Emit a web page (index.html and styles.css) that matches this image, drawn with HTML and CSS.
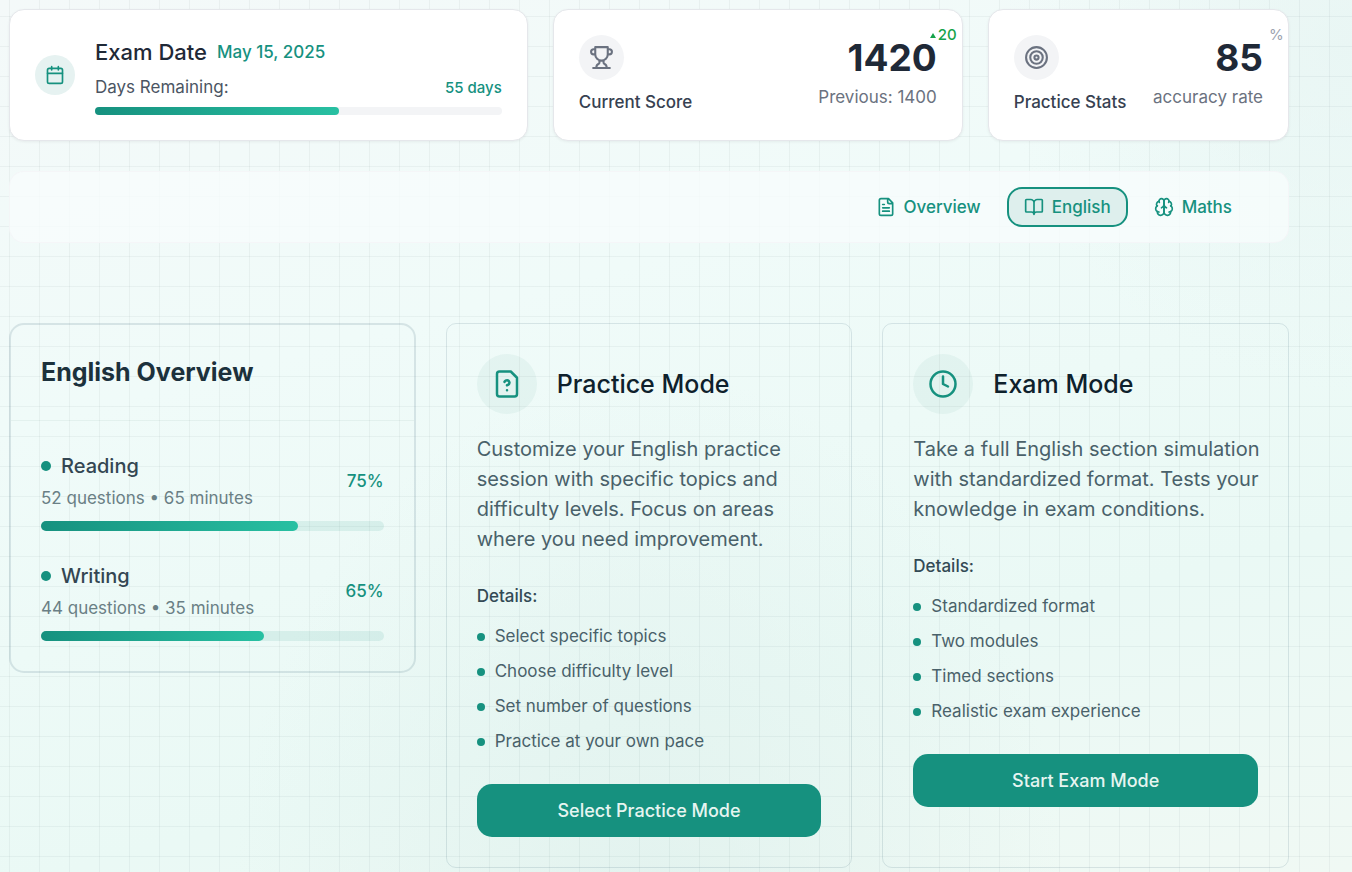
FILE: index.html
```html
<!DOCTYPE html>
<html lang="en">
<head>
<meta charset="utf-8">
<meta name="viewport" content="width=device-width, initial-scale=1">
<title>SAT Dashboard – English</title>
<link rel="stylesheet" href="styles.css">
</head>
<body>
<main class="page">
  <section class="summary">
    <article class="stat exam">
      <span class="badge badge-sm"><svg class="icon icon-20" viewBox="0 0 24 24"><path d="M8 2v4M16 2v4M3 10h18"/><rect x="3" y="4" width="18" height="18" rx="2"/></svg></span>
      <div class="exam-body">
        <div class="exam-title"><h2>Exam Date</h2><time datetime="2025-05-15">May 15, 2025</time></div>
        <div class="exam-row"><span>Days Remaining:</span><strong>55 days</strong></div>
        <div class="bar bar-thin"><div class="fill" style="width:60%"></div></div>
      </div>
    </article>
    <article class="stat">
      <div class="stat-name">
        <span class="badge badge-md"><svg class="icon icon-25" viewBox="0 0 24 24"><path d="M6 9H4.500a2.500 2.500 0 0 1 0-5H6M18 9h1.500a2.500 2.500 0 0 0 0-5H18M4 22h16M10 14.660V17c0 .55-.47.98-.97 1.210C7.850 18.750 7 20.240 7 22M14 14.660V17c0 .55.47.98.97 1.210C16.150 18.750 17 20.240 17 22M18 2H6v7a6 6 0 0 0 12 0V2Z"/></svg></span>
        <h3>Current Score</h3>
      </div>
      <div class="stat-value">
        <p class="number">1420<span class="note note-up"><svg class="arrow" viewBox="0 0 6 5"><path d="M3 0 6 5H0Z"/></svg>20</span></p>
        <p class="caption">Previous: 1400</p>
      </div>
    </article>
    <article class="stat">
      <div class="stat-name">
        <span class="badge badge-md"><svg class="icon icon-25" viewBox="0 0 24 24"><circle cx="12" cy="12" r="10"/><circle cx="12" cy="12" r="6"/><circle cx="12" cy="12" r="2"/></svg></span>
        <h3>Practice Stats</h3>
      </div>
      <div class="stat-value">
        <p class="number">85<span class="note">%</span></p>
        <p class="caption">accuracy rate</p>
      </div>
    </article>
  </section>

  <nav class="tabs">
    <button class="tab" type="button"><svg class="icon icon-20" viewBox="0 0 24 24"><path d="M15 2H6a2 2 0 0 0-2 2v16a2 2 0 0 0 2 2h12a2 2 0 0 0 2-2V7ZM14 2v4a2 2 0 0 0 2 2h4M10 9H8M16 13H8M16 17H8"/></svg>Overview</button>
    <button class="tab active" type="button" aria-current="page"><svg class="icon icon-20" viewBox="0 0 24 24"><path d="M12 7v14M3 18a1 1 0 0 1-1-1V4a1 1 0 0 1 1-1h5a4 4 0 0 1 4 4 4 4 0 0 1 4-4h5a1 1 0 0 1 1 1v13a1 1 0 0 1-1 1h-6a3 3 0 0 0-3 3 3 3 0 0 0-3-3z"/></svg>English</button>
    <button class="tab" type="button"><svg class="icon icon-20" viewBox="0 0 24 24"><path d="M12 5a3 3 0 1 0-5.997.125 4 4 0 0 0-2.526 5.770 4 4 0 0 0 .556 6.588A4 4 0 1 0 12 18Z"/><path d="M12 5a3 3 0 1 1 5.997.125 4 4 0 0 1 2.526 5.770 4 4 0 0 1-.556 6.588A4 4 0 1 1 12 18Z"/><path d="M15 13a4.500 4.500 0 0 1-3-4 4.500 4.500 0 0 1-3 4M17.599 6.500a3 3 0 0 0 .399-1.375M6.003 5.125A3 3 0 0 0 6.401 6.500M3.477 10.896a4 4 0 0 1 .585-.396M19.938 10.500a4 4 0 0 1 .585.396M6 18a4 4 0 0 1-1.967-.516M19.967 17.484A4 4 0 0 1 18 18"/></svg>Maths</button>
  </nav>

  <section class="modes">
    <article class="overview">
      <header class="overview-head"><h2>English Overview</h2></header>
      <div class="overview-body">
        <div class="skill">
          <div class="skill-row">
            <div class="skill-text"><h3>Reading</h3><p>52 questions • 65 minutes</p></div>
            <span class="percent">75%</span>
          </div>
          <div class="bar"><div class="fill" style="width:75%"></div></div>
        </div>
        <div class="skill">
          <div class="skill-row">
            <div class="skill-text"><h3>Writing</h3><p>44 questions • 35 minutes</p></div>
            <span class="percent">65%</span>
          </div>
          <div class="bar"><div class="fill" style="width:65%"></div></div>
        </div>
      </div>
    </article>

    <article class="mode">
      <header class="mode-head">
        <span class="badge badge-lg"><svg class="icon icon-30" viewBox="0 0 24 24"><path d="M15 2H6a2 2 0 0 0-2 2v16a2 2 0 0 0 2 2h12a2 2 0 0 0 2-2V7ZM12 17h.01M10 10.300c.2-.4.5-.8.9-1a2.100 2.100 0 0 1 2.600.4c.3.4.5.8.5 1.300 0 1.300-2 2-2 2"/></svg></span>
        <h2>Practice Mode</h2>
      </header>
      <p class="lead">Customize your English practice session with specific topics and difficulty levels. Focus on areas where you need improvement.</p>
      <h3>Details:</h3>
      <ul class="details">
        <li>Select specific topics</li>
        <li>Choose difficulty level</li>
        <li>Set number of questions</li>
        <li>Practice at your own pace</li>
      </ul>
      <button class="cta" type="button">Select Practice Mode</button>
    </article>

    <article class="mode">
      <header class="mode-head">
        <span class="badge badge-lg"><svg class="icon icon-30" viewBox="0 0 24 24"><circle cx="12" cy="12" r="10"/><path d="M12 6v6l4 2"/></svg></span>
        <h2>Exam Mode</h2>
      </header>
      <p class="lead">Take a full English section simulation with standardized format. Tests your knowledge in exam conditions.</p>
      <h3>Details:</h3>
      <ul class="details">
        <li>Standardized format</li>
        <li>Two modules</li>
        <li>Timed sections</li>
        <li>Realistic exam experience</li>
      </ul>
      <button class="cta" type="button">Start Exam Mode</button>
    </article>
  </section>
</main>
</body>
</html>
```
FILE: styles.css
```css
* { box-sizing: border-box; margin: 0; padding: 0; }

:root {
  --teal: #16917f;
  --teal-light: #28c0a2;
  --ink: #1f2937;
  --line: rgba(30, 80, 100, 0.13);
}

body {
  min-height: 100vh;
  font-family: Inter, "Open Sans", sans-serif;
  font-size: 17px;
  line-height: 25px;
  color: var(--ink);
  background:
    linear-gradient(to right, rgba(31, 60, 65, 0.05) 1px, transparent 1px) 9px 16px / 30px 30px,
    linear-gradient(to bottom, rgba(31, 60, 65, 0.05) 1px, transparent 1px) 9px 16px / 30px 30px,
    radial-gradient(circle at 100% 5%, rgba(230, 244, 242, 0.7), transparent 22%),
    radial-gradient(ellipse at 48% 105%, rgba(224, 241, 237, 0.8), transparent 42%),
    linear-gradient(165deg, #f4f9f9 0%, #f0fbf9 35%, #eaf9f5 72%, #f0f9f4 100%);
}

h2, h3 { font-weight: 500; }
button { font: inherit; cursor: pointer; }

.page {
  display: flex;
  flex-direction: column;
  padding: 9px 63px 4px 9px;
}

.icon {
  flex: none;
  fill: none;
  stroke: currentColor;
  stroke-width: 2;
  stroke-linecap: round;
  stroke-linejoin: round;
}
.icon-20 { width: 20px; height: 20px; }
.icon-25 { width: 25px; height: 25px; }
.icon-30 { width: 30px; height: 30px; }

.badge {
  display: flex;
  flex: none;
  align-items: center;
  justify-content: center;
  border-radius: 50%;
  color: var(--teal);
  background: rgba(22, 110, 100, 0.05);
}
.badge-sm { width: 40px; height: 40px; background: #e6f2f1; }
.badge-md { width: 45px; height: 45px; color: #6b7280; background: #f3f4f6; }
.badge-lg { width: 60px; height: 60px; }

.bar {
  height: 10px;
  border-radius: 5px;
  background: rgba(22, 145, 127, 0.1);
}
.bar-thin { height: 8px; background: #f3f4f6; }
.fill {
  height: 100%;
  border-radius: 5px;
  background: linear-gradient(to right, var(--teal), var(--teal-light));
}

/* Summary cards */
.summary {
  display: grid;
  grid-template-columns: repeat(12, 1fr);
  gap: 25px;
}
.stat {
  display: flex;
  justify-content: space-between;
  grid-column: span 3;
  padding: 25px;
  border: 1px solid #e5e7eb;
  border-radius: 15px;
  background: #fff;
  box-shadow: 0 1px 3px rgba(0, 0, 0, 0.06);
}
.stat:nth-child(2) { grid-column: span 4; }
.stat.exam {
  grid-column: span 5;
  align-items: center;
  gap: 20px;
}
.exam-body { flex: 1; }
.exam-title {
  display: flex;
  align-items: center;
  gap: 10px;
  margin-bottom: 5px;
}
.exam-title h2 { font-size: 22px; line-height: 35px; }
.exam-title time { font-size: 17px; font-weight: 500; color: var(--teal); }
.exam-row {
  display: flex;
  justify-content: space-between;
  margin-bottom: 7px;
  color: #4b5563;
}
.exam-row strong { font-size: 15px; font-weight: 500; color: var(--teal); }

.stat-name { display: flex; flex-direction: column; gap: 10px; }
.stat-name h3 { font-size: 17px; color: #374151; }
.stat-value { display: flex; flex-direction: column; gap: 5px; text-align: right; }
.number {
  position: relative;
  font-size: 37px;
  font-weight: 700;
  line-height: 45px;
}
.note {
  position: absolute;
  top: -10px;
  left: 100%;
  margin-left: 6px;
  font-size: 15px;
  font-weight: 400;
  line-height: 20px;
  color: #9ca3af;
}
.note-up {
  display: flex;
  align-items: center;
  gap: 2px;
  margin-left: -7px;
  font-weight: 500;
  color: #16a34a;
}
.arrow { width: 6px; height: 5px; fill: currentColor; }
.caption { color: #6b7280; }

/* Section tabs */
.tabs {
  display: flex;
  justify-content: flex-end;
  gap: 9px;
  margin: 30px 0 80px;
  padding: 15px 39px 15px 15px;
  border: 1px solid rgba(243, 244, 246, 0.7);
  border-radius: 15px;
  background: rgba(247, 252, 252, 0.8);
}
.tab {
  display: flex;
  align-items: center;
  gap: 8px;
  height: 40px;
  padding: 0 15px;
  border: 2px solid transparent;
  border-radius: 15px;
  font-weight: 500;
  color: var(--teal);
  background: none;
}
.tab.active { border-color: var(--teal); background: #deefed; }

/* Overview and mode cards */
.modes {
  display: grid;
  grid-template-columns: repeat(3, 1fr);
  align-items: start;
  gap: 30px;
}
.overview { border: 2px solid var(--line); border-radius: 15px; }
.overview-head { padding: 30px; border-bottom: 1px solid rgba(31, 80, 75, 0.06); }
.overview-head h2 { font-size: 25px; font-weight: 700; line-height: 35px; color: #1c313c; }
.overview-body { display: flex; flex-direction: column; gap: 30px; padding: 30px; }
.skill { display: flex; flex-direction: column; gap: 10px; }
.skill-row { display: flex; align-items: center; justify-content: space-between; }
.skill-text { display: flex; flex-direction: column; gap: 5px; color: #6a7f85; }
.skill-text h3 {
  display: flex;
  align-items: center;
  gap: 10px;
  font-size: 20px;
  line-height: 30px;
  color: #334652;
}
.skill-text h3::before {
  content: "";
  width: 10px;
  height: 10px;
  border-radius: 50%;
  background: var(--teal);
}
.percent { font-weight: 500; color: var(--teal); }

.mode {
  display: flex;
  flex-direction: column;
  align-self: stretch;
  gap: 30px;
  padding: 30px;
  border: 1px solid var(--line);
  border-radius: 10px;
}
.mode-head { display: flex; align-items: center; gap: 20px; }
.mode-head h2 { font-size: 25px; line-height: 35px; color: #0e212c; }
.lead { margin: -10px -10px 0 0; font-size: 20px; line-height: 30px; color: #49616a; }
.mode h3 { font-size: 17px; color: #334a55; }
.details {
  display: flex;
  flex-direction: column;
  gap: 10px;
  margin-top: -15px;
  list-style: none;
  color: #49616a;
}
.details li { display: flex; align-items: center; gap: 10px; }
.details li::before {
  content: "";
  width: 8px;
  height: 8px;
  border-radius: 50%;
  background: var(--teal);
}
.cta {
  min-height: 53px;
  border: 0;
  border-radius: 15px;
  font-size: 18px;
  font-weight: 500;
  color: #e6f5f1;
  background: var(--teal);
}
```
